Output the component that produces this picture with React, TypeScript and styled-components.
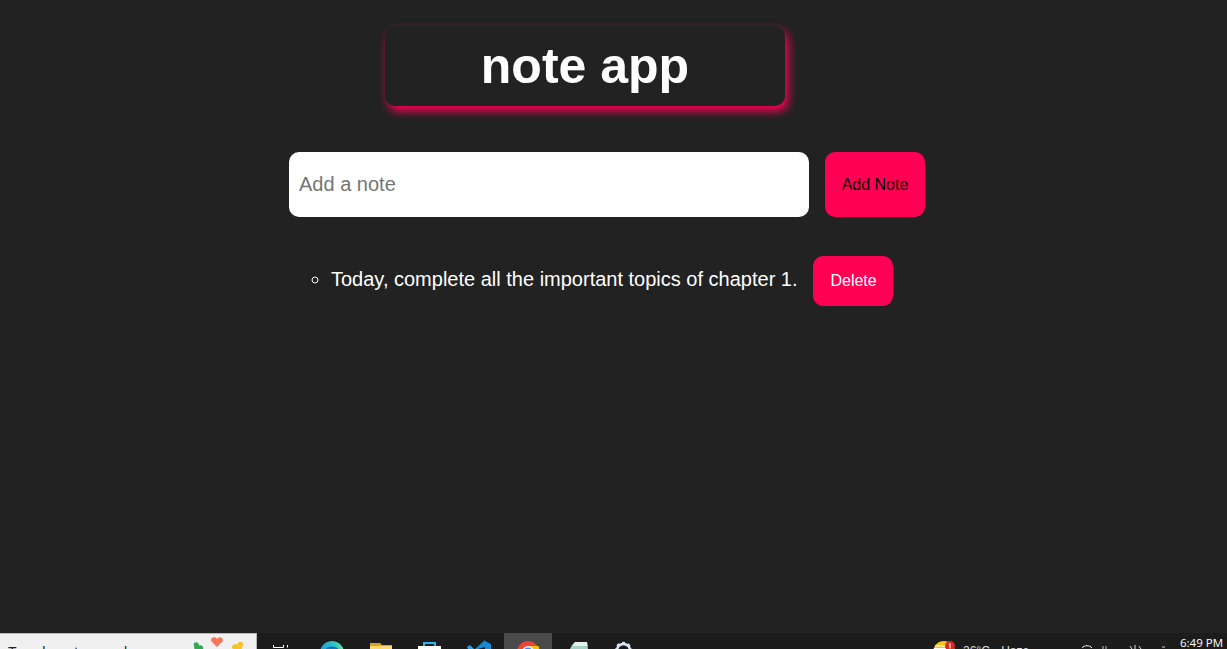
import React from "react";
import styled, { createGlobalStyle } from "styled-components";

const notes = ["Today, complete all the important topics of chapter 1."];

const heart = "M0 6L-5.5 0.5C-7.5-3-2-5.5 0-2C2-5.5 7.5-3 5.5 0.5Z";

const App = () => {
  return (
    <Page>
      <GlobalStyle />
      <Main>
        <Heading>note app</Heading>
        <Form>
          <NoteInput placeholder="Add a note" />
          <AddButton>Add Note</AddButton>
        </Form>
        <NoteList>
          {notes.map((note) => (
            <NoteItem key={note}>
              <NoteText>{note}</NoteText>
              <DeleteButton>Delete</DeleteButton>
            </NoteItem>
          ))}
        </NoteList>
      </Main>
      <Taskbar>
        <SearchBox>
          <SearchHint>Type here to search</SearchHint>
          <Hearts width="60" height="15" viewBox="0 0 60 15">
            <path d={heart} fill="#35a853" transform="translate(6 13) rotate(35) scale(0.9)" />
            <path d={heart} fill="#f4775a" transform="translate(25 7)" />
            <path d={heart} fill="#f8c22c" transform="translate(46 12.5) rotate(-25)" />
          </Hearts>
        </SearchBox>
        <AppIcons>
          <AppSlot>
            <svg width="48" height="16" viewBox="0 0 48 16">
              <path d="M9.5 12v2.5h10V12M23.5 12v2.5" fill="none" stroke="#fff" strokeWidth="1" />
            </svg>
          </AppSlot>
          <AppSlot>
            <svg width="48" height="16" viewBox="0 0 48 16">
              <defs>
                <linearGradient id="edgeRim" x1="0" y1="0" x2="1" y2="0">
                  <stop offset="0" stopColor="#1d9fd8" />
                  <stop offset="0.6" stopColor="#30c6c0" />
                  <stop offset="1" stopColor="#6fdc8c" />
                </linearGradient>
              </defs>
              <circle cx="20" cy="20" r="12" fill="url(#edgeRim)" />
              <ellipse cx="20" cy="18" rx="7" ry="4.5" fill="#1a6fc0" />
            </svg>
          </AppSlot>
          <AppSlot>
            <svg width="48" height="16" viewBox="0 0 48 16">
              <path d="M10 16V10h10l2 2h10v4z" fill="#e0a21a" />
              <path d="M10 16v-3h22v3z" fill="#fbd872" />
            </svg>
          </AppSlot>
          <AppSlot>
            <svg width="48" height="16" viewBox="0 0 48 16">
              <path d="M16 13V10h11v3" fill="none" stroke="#27b6ef" strokeWidth="2" />
              <path d="M10 13h23v3H10z" fill="#fff" />
            </svg>
          </AppSlot>
          <AppSlot>
            <svg width="48" height="16" viewBox="0 0 48 16">
              <path d="M29 8l6 3v5h-6v-2l-7 2h-3l10-9z" fill="#1a8ad0" />
              <path d="M11 14l3-2 4 4h-6z" fill="#2aa0e0" />
            </svg>
          </AppSlot>
          <AppSlot $active>
            <svg width="48" height="16" viewBox="0 0 48 16">
              <circle cx="24" cy="19" r="11" fill="#e8453c" />
              <path d="M24 13h10.5a11 11 0 0 1 .5 6H24z" fill="#f4c20d" />
              <circle cx="24" cy="19" r="6" fill="#f2f2f2" />
              <circle cx="24" cy="19" r="4.5" fill="#4285f4" />
            </svg>
          </AppSlot>
          <AppSlot>
            <svg width="48" height="16" viewBox="0 0 48 16">
              <path d="M20 12l3-3h12l1 7H18z" fill="#a9cfc9" />
              <path d="M23 9h12l0.5 4H21z" fill="#e6f0ee" />
            </svg>
          </AppSlot>
          <AppSlot>
            <svg width="48" height="16" viewBox="0 0 48 16">
              <circle cx="23.5" cy="17.5" r="6.5" fill="none" stroke="#dbe7f5" strokeWidth="2.5" />
              <circle cx="23.5" cy="17.5" r="8" fill="none" stroke="#dbe7f5" strokeWidth="1.5" strokeDasharray="3 3" />
            </svg>
          </AppSlot>
        </AppIcons>
        <Tray>
          <svg width="22" height="16" viewBox="0 0 22 16">
            <circle cx="11" cy="19" r="11" fill="#f5c518" />
            <path d="M2 13h12M1 15.5h12" stroke="#fff" strokeWidth="1.2" />
            <circle cx="17" cy="13" r="5" fill="#d42a20" />
            <path d="M17 10.5v5M15.8 11.5l1.2-1" stroke="#fff" strokeWidth="1" fill="none" />
          </svg>
          <TrayText>26°C Haze</TrayText>
          <TrayIcons width="90" height="16" viewBox="0 0 90 16">
            <path d="M0 15c2-3 8-3 10 0" fill="none" stroke="#eee" strokeWidth="1" />
            <path d="M21 13v3M24 13v3" stroke="#bbb" strokeWidth="1" />
            <path d="M48 13l2 3M53 12v4M57 13l2 3" stroke="#ddd" strokeWidth="1" fill="none" />
            <path d="M80 14h3" stroke="#ccc" strokeWidth="1" />
          </TrayIcons>
          <Clock>6:49 PM</Clock>
        </Tray>
      </Taskbar>
    </Page>
  );
};

export default App;

const GlobalStyle = createGlobalStyle`
  html, body {
    margin: 0;
    padding: 0;
    background-color: #222222;
  }
  * {
    box-sizing: border-box;
  }
`;

const Page = styled.div`
  width: 1227px;
  height: 649px;
  overflow: hidden;
  display: flex;
  flex-direction: column;
  background-color: #222222;
  font-family: "Liberation Sans", Arial, sans-serif;
`;

const Main = styled.div`
  height: 633px;
  flex-shrink: 0;
  padding-top: 26px;
`;

const Heading = styled.h1`
  width: 400px;
  height: 80px;
  margin: 0 0 46px 385px;
  display: flex;
  justify-content: center;
  align-items: center;
  font-size: 50px;
  font-weight: 700;
  color: #ffffff;
  border-radius: 10px;
  box-shadow: 3px 5px 10px #ff0055;
`;

const Form = styled.div`
  display: flex;
  gap: 16px;
  margin: 0 0 39px 289px;
`;

const NoteInput = styled.input`
  width: 520px;
  height: 65px;
  padding: 0 10px;
  border: none;
  outline: none;
  border-radius: 10px;
  background-color: #ffffff;
  font-family: inherit;
  font-size: 20px;

  &::placeholder {
    color: #757575;
  }
`;

const Button = styled.button`
  border: none;
  border-radius: 10px;
  background-color: #ff0055;
  font-family: inherit;
  font-size: 16px;
`;

const AddButton = styled(Button)`
  width: 100px;
  height: 65px;
  color: #000000;
`;

const DeleteButton = styled(Button)`
  width: 80px;
  height: 50px;
  padding: 0 0 0 2px;
  color: #ffffff;
`;

const NoteList = styled.ul`
  list-style: circle;
  margin: 0;
  padding: 0 0 0 331px;
  color: #ffffff;
  font-size: 20px;
`;

const NoteItem = styled.li`
  height: 50px;
`;

const NoteText = styled.span`
  margin-right: 15px;
  line-height: 46px;
  vertical-align: top;
`;

const Taskbar = styled.div`
  height: 16px;
  flex-shrink: 0;
  display: flex;
  overflow: hidden;
  background-color: #1c1c1c;
`;

const SearchBox = styled.div`
  width: 257px;
  flex-shrink: 0;
  display: flex;
  align-items: flex-start;
  padding-left: 8px;
  background-color: #f0f0f0;
  border-top: 1px solid #b8b8b8;
  border-right: 1px solid #b8b8b8;
`;

const SearchHint = styled.span`
  margin-top: 10px;
  font-size: 14px;
  line-height: 16px;
  color: #222222;
  white-space: nowrap;
`;

const Hearts = styled.svg`
  flex-shrink: 0;
  margin-left: auto;
  margin-right: 4px;
`;

const AppIcons = styled.div`
  display: flex;
  margin-left: 7px;
`;

const AppSlot = styled.div<{ $active?: boolean }>`
  width: 48px;
  height: 16px;
  background-color: ${(p) => (p.$active ? "#4a4a4a" : "transparent")};
`;

const Tray = styled.div`
  flex: 1;
  display: flex;
  align-items: flex-start;
  padding-left: 285px;
`;

const TrayText = styled.span`
  margin: 11px 0 0 8px;
  font-size: 12px;
  word-spacing: 8px;
  color: #dddddd;
  white-space: nowrap;
`;

const TrayIcons = styled.svg`
  flex-shrink: 0;
  margin-left: 53px;
`;

const Clock = styled.span`
  margin-left: auto;
  margin-right: 4px;
  margin-top: 2px;
  font-family: "Open Sans", sans-serif;
  font-size: 11.5px;
  color: #ffffff;
  white-space: nowrap;
`;
